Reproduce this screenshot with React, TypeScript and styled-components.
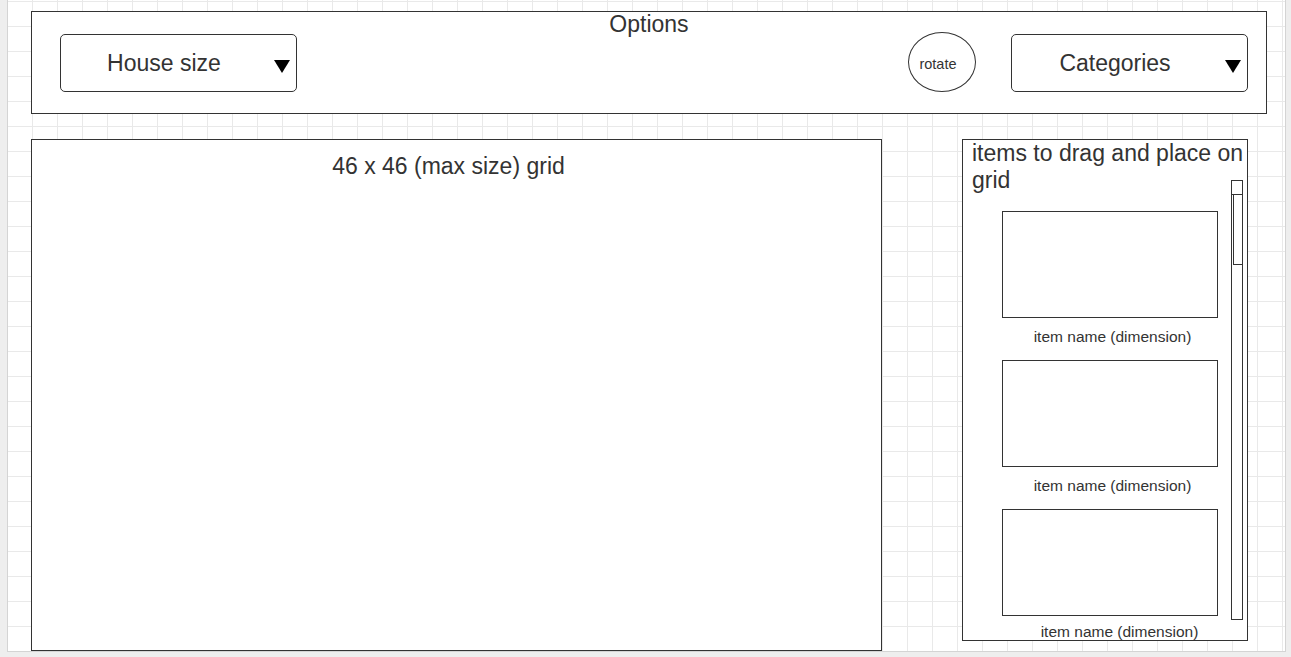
import styled, { createGlobalStyle } from "styled-components";

const GlobalStyle = createGlobalStyle`
  html, body {
    margin: 0;
    padding: 0;
    background: #eeeeee;
    font-family: "Liberation Sans", Helvetica, Arial, sans-serif;
    color: #333333;
    overflow: hidden;
  }
`;

const Canvas = styled.div`
  box-sizing: border-box;
  margin-left: 7px;
  width: 1279px;
  height: 652px;
  padding: 11px 0 0 23px;
  border-left: 1px solid #d4d4d4;
  border-right: 1px solid #d4d4d4;
  border-bottom: 1px solid #d4d4d4;
  background-color: #ffffff;
  background-image: linear-gradient(to right, #e9e9e9 1px, transparent 1px),
    linear-gradient(to bottom, #e9e9e9 1px, transparent 1px);
  background-size: 25px 25px;
  background-position: 24px 1px;
`;

const OptionsBar = styled.div`
  box-sizing: border-box;
  width: 1236px;
  height: 103px;
  border: 1px solid #333;
  background: #fff;
  display: flex;
  flex-direction: column;
`;

const BarTitle = styled.div`
  height: 22px;
  font-size: 23px;
  line-height: 24px;
  text-align: center;
  color: #333;
`;

const Controls = styled.div`
  display: flex;
  align-items: flex-start;
  padding: 0 18px 0 28px;
`;

const Dropdown = styled.div`
  box-sizing: border-box;
  position: relative;
  width: 237px;
  height: 58px;
  border: 1px solid #333;
  border-radius: 5px;
  background: #fff;
  display: flex;
  align-items: center;
  justify-content: center;
  padding-right: 29px;
  font-size: 23px;
  line-height: 1;
  color: #333;
`;

const Caret = styled.span`
  position: absolute;
  right: 6px;
  top: 25px;
  width: 0;
  height: 0;
  border-left: 8px solid transparent;
  border-right: 8px solid transparent;
  border-top: 13px solid #000;
`;

const RotateButton = styled.div`
  box-sizing: border-box;
  width: 68px;
  height: 60px;
  margin: -2px 35px 0 auto;
  border: 1px solid #333;
  border-radius: 50%;
  display: flex;
  align-items: center;
  justify-content: center;
  font-size: 14.5px;
  color: #333;
  padding: 4px 8px 0 0;
`;

const Workspace = styled.div`
  display: flex;
  align-items: flex-start;
  gap: 80px;
  margin-top: 25px;
`;

const GridBoard = styled.div`
  box-sizing: border-box;
  width: 851px;
  height: 512px;
  border: 1px solid #333;
  background: #fff;
  padding: 13px 16px 0 0;
  font-size: 23px;
  line-height: 26px;
  text-align: center;
  color: #333;
`;

const ItemsPanel = styled.div`
  box-sizing: border-box;
  position: relative;
  width: 286px;
  height: 502px;
  border: 1px solid #333;
  background: #fff;
  padding-left: 9px;
`;

const PanelTitle = styled.div`
  font-size: 23px;
  line-height: 27px;
  color: #333;
`;

const ItemList = styled.div`
  display: flex;
  flex-direction: column;
  gap: 15px;
  margin: 17px 0 0 30px;
`;

const Item = styled.div`
  display: flex;
  flex-direction: column;
`;

const ItemPreview = styled.div`
  box-sizing: border-box;
  width: 216px;
  height: 107px;
  border: 1px solid #333;
`;

const ItemLabel = styled.div<{ $dx: number; $dy: number }>`
  box-sizing: border-box;
  width: 216px;
  height: 16px;
  margin-top: ${(p) => p.$dy}px;
  padding-left: ${(p) => p.$dx}px;
  font-size: 15.5px;
  line-height: 16px;
  text-align: center;
  white-space: nowrap;
  color: #333;
`;

const Scrollbar = styled.div`
  box-sizing: border-box;
  position: absolute;
  left: 268px;
  top: 40px;
  width: 12px;
  height: 440px;
  border: 1px solid #333;
  background: #fff;
`;

const ScrollArrow = styled.div`
  height: 13px;
  border-bottom: 1px solid #333;
`;

const ScrollThumb = styled.div`
  height: 69px;
  margin-left: 1px;
  border-left: 1px solid #333;
  border-bottom: 1px solid #333;
`;

const items = [
  { name: "item name (dimension)", dx: 5, dy: 11 },
  { name: "item name (dimension)", dx: 5, dy: 11 },
  { name: "item name (dimension)", dx: 19, dy: 8 },
];

const App = () => {
  return (
    <>
      <GlobalStyle />
      <Canvas>
        <OptionsBar>
          <BarTitle>Options</BarTitle>
          <Controls>
            <Dropdown>
              House size
              <Caret />
            </Dropdown>
            <RotateButton>rotate</RotateButton>
            <Dropdown>
              Categories
              <Caret />
            </Dropdown>
          </Controls>
        </OptionsBar>
        <Workspace>
          <GridBoard>46 x 46 (max size) grid</GridBoard>
          <ItemsPanel>
            <PanelTitle>items to drag and place on grid</PanelTitle>
            <ItemList>
              {items.map((item, i) => (
                <Item key={i}>
                  <ItemPreview />
                  <ItemLabel $dx={item.dx} $dy={item.dy}>
                    {item.name}
                  </ItemLabel>
                </Item>
              ))}
            </ItemList>
            <Scrollbar>
              <ScrollArrow />
              <ScrollThumb />
            </Scrollbar>
          </ItemsPanel>
        </Workspace>
      </Canvas>
    </>
  );
};

export default App;
